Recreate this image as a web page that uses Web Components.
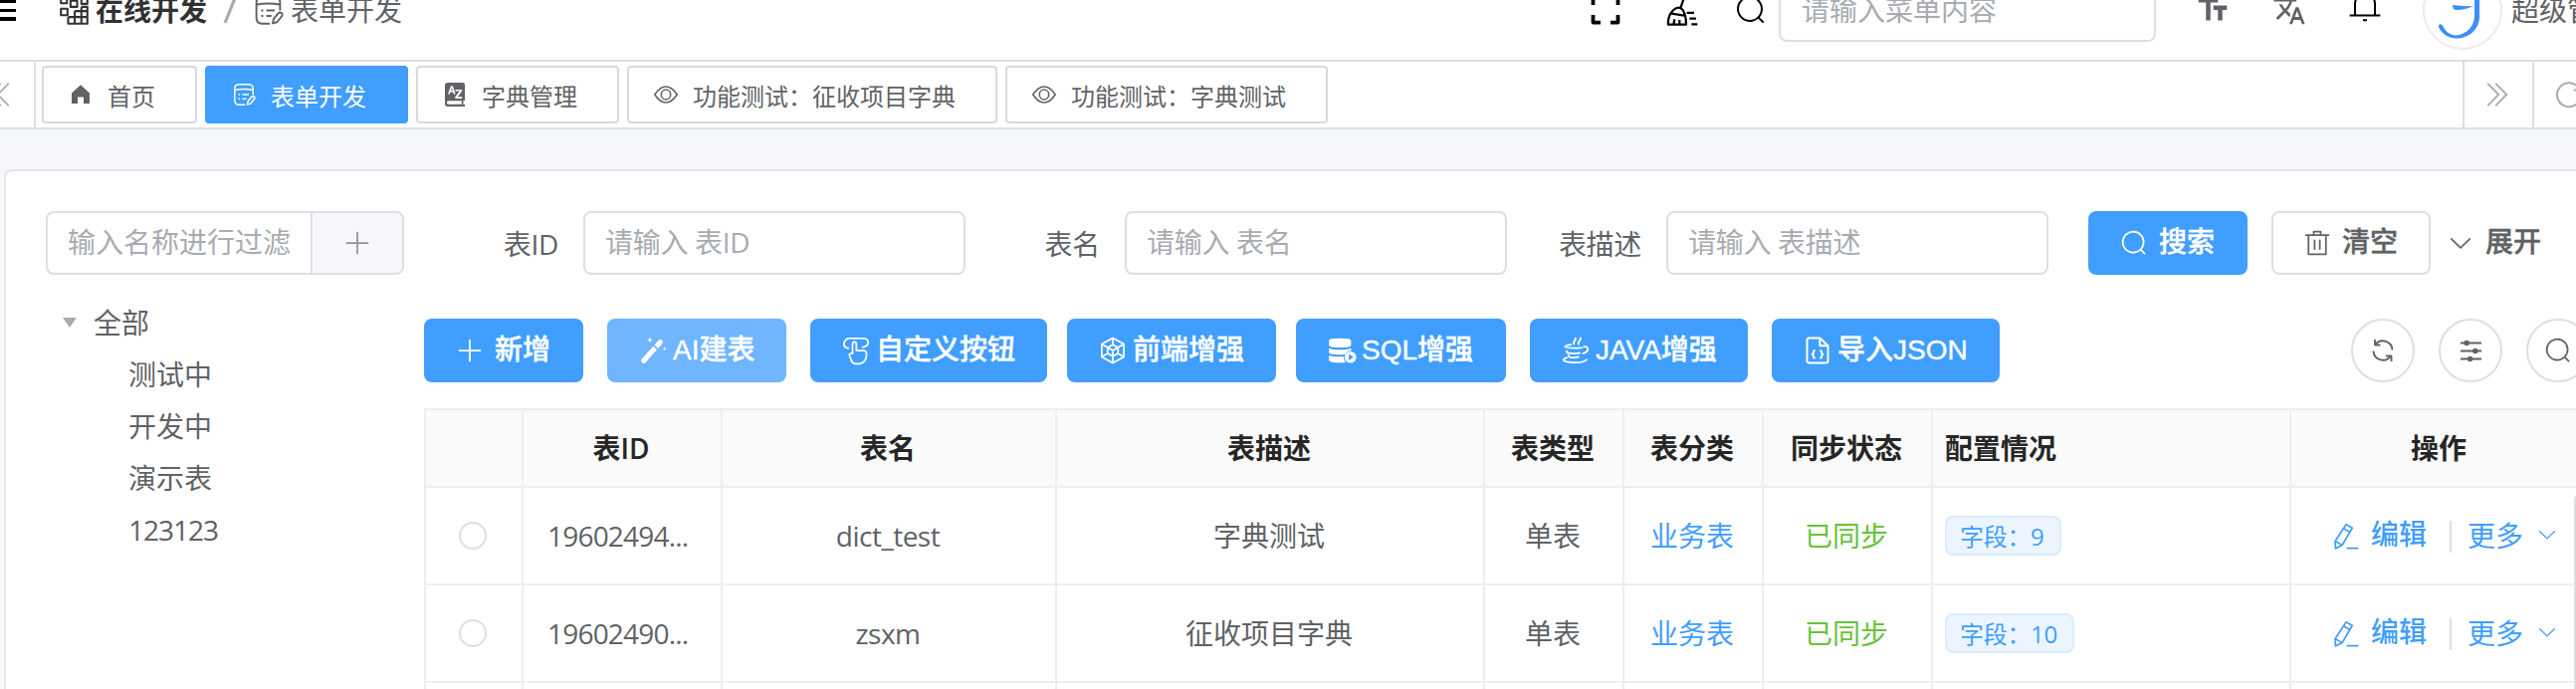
<!DOCTYPE html>
<html lang="zh-CN">
<head>
<meta charset="UTF-8">
<title>表单开发</title>
<style>
    body {
        margin: 0;
        width: 2588px;
        height: 692px;
        overflow: hidden;
        background: #f5f7fa;
        color: #606266;
        font-family: "Open Sans", "Noto Sans CJK SC", sans-serif;
        font-size: 28px;
        line-height: 1;
    }
</style>
</head>
<body>
<app-header></app-header>
<tab-bar>
    <tab-item icon="home">首页</tab-item>
    <tab-item icon="form" active>表单开发</tab-item>
    <tab-item icon="dict">字典管理</tab-item>
    <tab-item icon="view">功能测试：征收项目字典</tab-item>
    <tab-item icon="view">功能测试：字典测试</tab-item>
</tab-bar>
<form-page></form-page>

<script>
const ICONS = {
    search: '<path d="m795.904 750.72 124.992 124.928a32 32 0 0 1-45.248 45.248L750.656 795.904a416 416 0 1 1 45.248-45.248zM480 832a352 352 0 1 0 0-704 352 352 0 0 0 0 704z"/>',
    plus: '<path d="M480 480V128a32 32 0 0 1 64 0v352h352a32 32 0 1 1 0 64H544v352a32 32 0 1 1-64 0V544H128a32 32 0 0 1 0-64z"/>',
    trash: '<path d="M160 256H96a32 32 0 0 1 0-64h256V95.936a32 32 0 0 1 32-32h256a32 32 0 0 1 32 32V192h256a32 32 0 1 1 0 64h-64v672a32 32 0 0 1-32 32H192a32 32 0 0 1-32-32zm448-64v-64H416v64zM224 896h576V256H224zm192-128a32 32 0 0 1-32-32V416a32 32 0 0 1 64 0v320a32 32 0 0 1-32 32m192 0a32 32 0 0 1-32-32V416a32 32 0 0 1 64 0v320a32 32 0 0 1-32 32"/>',
    down: '<path d="M831.872 340.864 512 652.672 192.128 340.864a30.592 30.592 0 0 0-42.752 0 29.12 29.12 0 0 0 0 41.6L489.664 714.24a32 32 0 0 0 44.672 0l340.288-331.712a29.12 29.12 0 0 0 0-41.728 30.592 30.592 0 0 0-42.752 0z"/>',
    next: '<path d="M452.864 149.312a29.12 29.12 0 0 1 41.728.064L826.24 489.664a32 32 0 0 1 0 44.672L494.592 874.624a29.12 29.12 0 0 1-41.728 0 30.592 30.592 0 0 1 0-42.752L764.736 512 452.864 192a30.592 30.592 0 0 1 0-42.688m-256 0a29.12 29.12 0 0 1 41.728.064L570.24 489.664a32 32 0 0 1 0 44.672L238.592 874.624a29.12 29.12 0 0 1-41.728 0 30.592 30.592 0 0 1 0-42.752L508.736 512 196.864 192a30.592 30.592 0 0 1 0-42.688"/>',
    // the rest are drawn on a 24 grid
    text: '<path d="M2.5 4v3h5v12h3V7h5V4zm19 5h-9v3h3v7h3v-7h3z"/>',
    translate: '<path d="M12.87 15.07l-2.54-2.51.03-.03c1.74-1.94 2.98-4.17 3.71-6.53H17V4h-7V2H8v2H1v1.99h11.17C11.5 7.92 10.44 9.75 9 11.35 8.07 10.32 7.3 9.19 6.69 8h-2c.73 1.63 1.73 3.17 2.98 4.56l-5.09 5.02L4 19l5-5 3.11 3.11.76-2.04zM18.5 10h-2L12 22h2l1.12-3h4.75L21 22h2l-4.5-12zm-2.62 7l1.62-4.33L19.12 17h-3.24z"/>',
    home: '<path d="M12 2.2 21 10.4V21h-6v-6.6H9V21H3V10.4z"/>',
    dict: '<path fill-rule="evenodd" d="M5 0h15q2 0 2 2v16h-1.500v4H22v2H5q-3 0-3-3V3q0-3 3-3zM5.500 18.200q-1.700 0-1.700 1.800t1.700 1.800H18.800V18.200zM5 11.500h1.800l.6-1.900h2.800l.6 1.900h1.900L9.900 3.500H7.800zM8 8l.9-2.700.8 2.700zM12.500 8.500h4.300l-4.500 5.800V16h7v-1.700h-4.500l4.400-5.700V7h-6.700z"/>',
    view: '<g class="s" stroke-width="1.600"><path d="M.8 12Q6 4 12 4t11.200 8Q18 20 12 20T.8 12z"/><ellipse cx="12" cy="12" rx="4.700" ry="5"/></g>',
    form: '<g class="s" stroke-width="1.500"><path d="M21.200 12V5.500C21.200 3.200 19 1.800 16.500 1.800H7C4.500 1.800 2.800 3.500 2.800 5.500v12c0 3 1.500 4.700 4 4.700h6.500M2.800 7.500Q7 6.600 12 6.600t9.200.9M6.500 12h1.600M10.500 12h6.500M6.500 16.300h1.600M10.500 16.300h4M15.500 22l.6-3.300 3.700-4.500q1.400-1.200 2.500-.2t.2 2.600l-3.700 4.500z"/></g>',
    grid: '<g class="s" stroke-width="1.700"><path d="M1 1h5v5H1zM1 10.500h5.500v5.500H1zM9 4h5.500v5H9zM18 .5h5v6h-5zM12.500 12.500V23M18 9v14M7 17.500h16M12.500 12.500h10.500M18 9h5v14H7v-5.500"/></g>',
    full: '<g class="s" stroke-width="3"><path d="M2 8V2h6M16 2h6v6M22 16v6h-6M8 22H2v-6"/></g>',
    broom: '<g class="s" stroke-width="1.700"><path d="M14 1 10.800 10.500M5.500 12q4-3.500 7 0 2.500 4 2.500 11H1.500Q1 16 5.500 12zM4 14.800l9.500 1.500M5.500 23l.8-4M10 23v-3.500M15.500 14.200h5.500M17.500 18.500h5M19 22.800h4.500"/></g>',
    bell: '<g class="s" stroke-width="1.500"><path d="M4.500 18V9.500a7.500 7.500 0 0 1 15 0V18M.5 18.300h23M10.500 22h3M12 2V0"/></g>',
    reload: '<g class="s" stroke-width="1.500"><path d="M20.300 8.700A9 9 0 1 0 21 12M21 3.500v5.200h-5.500"/></g>',
    wand: '<path d="m2.200 19.600 10-11.200 3.200 3L5.400 22.600q-1.600 1-2.800-.2t-.4-2.800zM13.300 7.200l3.700-4.100q1.300-1.200 2.700 0t.4 3l-3.600 4.100zM9.300.5l.7 1.800 1.800.7-1.800.7-.7 1.800-.7-1.800L6.800 3l1.800-.7zM22 8.500l.5 1.500 1.500.5-1.500.5-.5 1.500-.5-1.500-1.500-.5 1.500-.5z"/>',
    touch: '<g class="s" stroke-width="1.500"><path d="M6 10H4.500Q1.500 9 1.500 6.500T5 1.500h13.500q4 .500 4 3.500T19 9h-2M9 15V6.500q.2-1.800 1.700-1.800t1.600 1.800V12h6q3 .5 2.800 3.500-.2 7-5.800 8h-3.800q-3-.5-4-4l-1.300-3.700q.8-2 2.800-.8"/></g>',
    hexagon: '<g class="s" stroke-width="1.500"><path d="m12 1.200 9.500 5.300v11L12 22.800 2.500 17.500v-11zM12 7l4.500 2.500v5L12 17l-4.500-2.500v-5zM12 12v5M12 12 7.500 9.500M12 12l4.500-2.500M12 1.200V7M2.500 6.500l5 3M21.500 6.500l-5 3M2.500 17.500l5-3M21.500 17.500l-5-3M12 17v5.800"/></g>',
    database: '<path d="M1 3.500Q1 1.500 10.500 1.500T20 3.500v4Q20 9.500 10.500 9.500T1 7.500zM1 10q3 1.300 9.500 1.300T20 10v2.200q-3.500.3-5 3-2 .5-4.500.5Q1 15.700 1 14zM1 16.200q3 1.200 9.500 1.200h3.300q-.3 2.800 1.500 4.900-2 .2-4.800.2Q1 22.500 1 20.500z"/><path fill-rule="evenodd" d="M19.500 12.800a5 5 0 1 1 0 10 5 5 0 0 1 0-10zm-1.400 2.300v5.400l4-2.700z"/>',
    java: '<g class="s" stroke-width="1.500"><path d="M11 7q-1.500-1.500 0-3.200T11.500.8M15 7q-1.500-1.500.2-3.200T15.800.8M8.500 7Q2 8 3 9t8 1 7-.8M18.500 8.800q4-.6 4 2 0 3-5 4M4.500 11.800q-1 2.200 1.500 2.500 5 .8 10-.2M6 15.500q-.8 2 1.500 2.400 3.800.5 7.500-.4M5 18.200q-4 .6-3.500 2.200 1.500 2 10 2t10.500-3"/></g>',
    json: '<g class="s" stroke-width="1.700"><path d="M14 1.200H5Q3 1.200 3 3.200v17.500q0 2 2 2h14q2 0 2-2V8zM14 1.200V8h7M10 12q-1.500 0-1.500 1.500T7.300 15.300q1.200.3 1.200 1.800T10 18.600M14 12q1.500 0 1.500 1.500t1.200 1.800q-1.200.3-1.200 1.800T14 18.600"/></g>',
    refresh: '<g class="s" stroke-width="1.900"><path d="M2.500 12.500a9.500 9.500 0 0 0 17 5.500M21.500 11.500A9.500 9.500 0 0 0 4.500 6M4 1v5.500h5.500M20.500 23v-5.500H15"/></g>',
    sliders: '<path d="M1 2.600h22v2H1zM1 11h22v2H1zM1 19.400h22v2H1z"/><circle cx="7.500" cy="3.600" r="2.900"/><circle cx="16.500" cy="12" r="2.900"/><circle cx="11" cy="20.400" r="2.900"/>',
    pen: '<g class="s" stroke-width="1.500"><path d="M12.500 1.500 18 4.700 9 20l-6 3-.300-6.500zM10.300 5.200l5.600 3.300M2.700 16.500l6 3.400M13 22.800h10.500"/></g>'
};

class UiIcon extends HTMLElement {
    connectedCallback() {
        const name = this.getAttribute('name');
        const size = this.getAttribute('size') || 28;
        const box = ['search', 'plus', 'trash', 'down', 'next'].includes(name) ? 1024 : 24;
        this.attachShadow({ mode: 'open' });
        this.shadowRoot.innerHTML = `
            <style>
                :host { display: block; flex: none; }
                svg { display: block; fill: currentColor; overflow: visible; }
                .s { fill: none; stroke: currentColor; stroke-linejoin: round; }
            </style>
            <svg width="${size}" height="${size}" viewBox="0 0 ${box} ${box}">${ICONS[name]}</svg>
        `;
    }
}

class AppHeader extends HTMLElement {
    connectedCallback() {
        this.attachShadow({ mode: 'open' });
        this.shadowRoot.innerHTML = `
            <style>
                :host {
                    display: flex;
                    align-items: center;
                    justify-content: space-between;
                    box-sizing: border-box;
                    height: 102px;
                    margin-top: -40px;
                    background: #fff;
                    border-bottom: 2px solid #dcdfe6;
                }
                .crumbs, .tools { display: flex; align-items: center; }
                .tools { width: 990px; color: #000; }
                .tools > * { flex: none; }
                .menu { width: 16px; height: 21px; border-top: 3px solid #000; box-sizing: border-box;
                    background: linear-gradient(#000, #000) 0 6px / 16px 3px no-repeat, linear-gradient(#000, #000) 0 100% / 16px 4px no-repeat; }
                .crumbs ui-icon { color: #303133; margin: 0 7px 0 44px; }
                .crumbs b { color: #303133; }
                .crumbs i { margin: 0 16px; width: 14px; }
                .crumbs i svg { display: block; }
                .crumbs .leaf { color: #606266; margin: 0 7px 0 0; }
                .input {
                    box-sizing: border-box;
                    width: 379px;
                    height: 64px;
                    margin: 0 39px 0 12px;
                    padding-left: 21px;
                    border: 2px solid #dcdfe6;
                    border-radius: 8px;
                    color: #a8abb2;
                    line-height: 60px;
                }
                .avatar { box-sizing: border-box; width: 80px; height: 80px; border: 2px solid #ececec; border-radius: 50%; margin: 0 9px 0 42px; }
                .avatar svg { display: block; margin: -2px; }
                .name, .gray { color: #606266; }
                .name { width: 56px; white-space: nowrap; }
            </style>
            <div class="crumbs">
                <div class="menu"></div>
                <ui-icon name="grid" size="29"></ui-icon>
                <b>在线开发</b>
                <i><svg width="14" height="30"><path d="M12.500 2 2 28" stroke="#a8abb2" stroke-width="3.200"/></svg></i>
                <ui-icon class="leaf" name="form" size="31"></ui-icon>
                <span>表单开发</span>
            </div>
            <div class="tools">
                <ui-icon name="full" size="30"></ui-icon>
                <ui-icon name="broom" size="32" style="margin-left: 46px"></ui-icon>
                <ui-icon name="search" size="32" style="margin-left: 37px"></ui-icon>
                <div class="input">请输入菜单内容</div>
                <ui-icon class="gray" name="text" size="36"></ui-icon>
                <ui-icon class="gray" name="translate" size="34" style="margin-left: 42px"></ui-icon>
                <ui-icon name="bell" size="32" style="margin: -6px 0 0 43px"></ui-icon>
                <div class="avatar">
                    <svg width="80" height="80" fill="#3d8ff8">
                        <path d="M57 8V48C56 61 45 69 33 68.500 23 68 16 60 16 56c0-2.500 3-2.500 4.500.500C23 62 28 65.500 33 65.500 43 65 52 57 52 46V8z"/>
                        <path d="M30 35q10 1.500 21 1-8 4-17 4-4 0-4-5z"/>
                    </svg>
                </div>
                <div class="name">超级管</div>
            </div>
        `;
    }
}

class TabBar extends HTMLElement {
    connectedCallback() {
        this.attachShadow({ mode: 'open' });
        this.shadowRoot.innerHTML = `
            <style>
                :host {
                    display: flex;
                    box-sizing: border-box;
                    height: 68px;
                    background: #fff;
                    border-bottom: 2px solid #dcdfe6;
                    color: #a8abb2;
                }
                div { display: flex; align-items: center; box-sizing: border-box; }
                .prev { width: 36px; border-right: 2px solid #dcdfe6; }
                .prev ui-icon { transform: scaleX(-1); margin-left: -17px; }
                .tabs { flex: 1; gap: 8px; padding-left: 6px; align-items: flex-start; padding-top: 4px; color: #606266; }
                .tool { width: 70px; padding-left: 17px; border-left: 2px solid #dcdfe6; }
                .tool:last-child { width: 44px; padding-left: 19px; overflow: hidden; }
            </style>
            <div class="prev"><ui-icon name="next" size="32"></ui-icon></div>
            <div class="tabs"><slot></slot></div>
            <div class="tool"><ui-icon name="next" size="32"></ui-icon></div>
            <div class="tool"><ui-icon name="reload" size="32"></ui-icon></div>
        `;
    }
}

class TabItem extends HTMLElement {
    connectedCallback() {
        this.attachShadow({ mode: 'open' });
        this.shadowRoot.innerHTML = `
            <style>
                :host {
                    display: flex;
                    align-items: center;
                    gap: 15px;
                    box-sizing: border-box;
                    height: 58px;
                    padding: 0 40px 0 25px;
                    border: 2px solid #d9d9d9;
                    border-radius: 4px;
                    font-size: 24px;
                    white-space: nowrap;
                }
                :host([active]) { color: #fff; background: #409eff; border-color: #409eff; }
                span { padding-top: 3px; }
            </style>
            <ui-icon name="${this.getAttribute('icon')}" size="24"></ui-icon>
            <span><slot></slot></span>
        `;
    }
}

class UiButton extends HTMLElement {
    connectedCallback() {
        this.attachShadow({ mode: 'open' });
        this.shadowRoot.innerHTML = `
            <style>
                :host {
                    display: flex;
                    flex: none;
                    align-items: center;
                    gap: 6px;
                    box-sizing: border-box;
                    width: var(--w, 160px);
                    height: 64px;
                    padding-left: 32px;
                    border-radius: 8px;
                    background: #409eff;
                    color: #fff;
                    font-family: "Liberation Sans", "Noto Sans CJK SC", sans-serif;
                    font-weight: 500;
                    white-space: nowrap;
                    -webkit-text-stroke: 0.4px currentColor;
                }
                :host([wide]) { gap: 11px; }
                :host([light]) { background: #6fb5ff; }
                :host([plain]) { background: #fff; color: #606266; border: 2px solid #dcdfe6; padding-left: 30px; }
                :host([text]) { background: none; color: #606266; padding-left: 0; }
            </style>
            <ui-icon name="${this.getAttribute('icon')}"></ui-icon>
            <span><slot></slot></span>
        `;
    }
}

class SearchField extends HTMLElement {
    connectedCallback() {
        const label = this.getAttribute('label');
        this.attachShadow({ mode: 'open' });
        this.shadowRoot.innerHTML = `
            <style>
                :host { display: flex; align-items: center; gap: 25px; flex: none; letter-spacing: -0.3px; }
                label { width: 135px; text-align: right; padding-top: 2px; }
                div {
                    box-sizing: border-box;
                    width: 384px;
                    height: 64px;
                    padding-left: 20px;
                    border: 2px solid #dcdfe6;
                    border-radius: 8px;
                    color: #a8abb2;
                    line-height: 58px;
                }
            </style>
            <label>${label}</label>
            <div>请输入 ${label}</div>
        `;
    }
}

class TypeTree extends HTMLElement {
    connectedCallback() {
        this.attachShadow({ mode: 'open' });
        this.shadowRoot.innerHTML = `
            <style>
                :host { display: block; width: 360px; flex: none; }
                .filter {
                    display: flex;
                    box-sizing: border-box;
                    height: 64px;
                    border: 2px solid #dcdfe6;
                    border-radius: 8px;
                    overflow: hidden;
                    margin-bottom: 22px;
                    color: #a8abb2;
                    line-height: 58px;
                }
                .filter span { width: 244px; padding-left: 20px; }
                .filter div { flex: 1; display: flex; align-items: center; justify-content: center; background: #f5f7fa; border-left: 2px solid #dcdfe6; color: #909399; }
                .node { display: flex; align-items: center; height: 52px; padding-left: 83px; }
                .root { padding-left: 17px; gap: 17px; }
                .root::before { content: ""; border: 7px solid transparent; border-top: 10px solid #a8abb2; border-bottom: 0; }
                .num { letter-spacing: -1px; }
            </style>
            <div class="filter"><span>输入名称进行过滤</span><div><ui-icon name="plus"></ui-icon></div></div>
            <div class="node root">全部</div>
            <div class="node">测试中</div>
            <div class="node">开发中</div>
            <div class="node">演示表</div>
            <div class="node num">123123</div>
        `;
    }
}

class DataTable extends HTMLElement {
    connectedCallback() {
        const heads = ['', '表ID', '表名', '表描述', '表类型', '表分类', '同步状态', '配置情况', '操作'];
        const rows = [
            ['19602494...', 'dict_test', '字典测试', '9'],
            ['19602490...', 'zsxm', '征收项目字典', '10']
        ];
        this.attachShadow({ mode: 'open' });
        this.shadowRoot.innerHTML = `
            <style>
                :host { display: block; position: relative; border-top: 2px solid #ebeef5; border-left: 2px solid #ebeef5; }
                .row { display: grid; grid-template-columns: 98px 200px 336px 430px 140px 140px 170px 360px 300px; height: 98px; }
                .head { height: 78px; background: #fafafa; color: #262626; font-weight: 600; }
                .row > div {
                    display: flex;
                    align-items: center;
                    justify-content: center;
                    border-right: 2px solid #ebeef5;
                    border-bottom: 2px solid #ebeef5;
                    padding-right: 2px;
                }
                .row > div:nth-child(8) { justify-content: flex-start; padding-left: 12px; }
                .radio { width: 24px; height: 24px; border: 2px solid #dcdfe6; border-radius: 50%; margin-top: -1px; }
                .row .id { justify-content: flex-start; padding-left: 24px; letter-spacing: -0.8px; }
                .name { letter-spacing: -0.5px; }
                .blue { color: #409eff; }
                .green { color: #67c23a; }
                .tag {
                    height: 36px;
                    padding: 0 15px 0 13px;
                    border: 2px solid #d9ecff;
                    border-radius: 8px;
                    background: #ecf5ff;
                    color: #409eff;
                    font-size: 24px;
                    line-height: 38px;
                    margin-top: -1px;
                    letter-spacing: -0.3px;
                }
                .row .ops { justify-content: flex-start; padding-left: 41px; color: #409eff; }
                .ops span { margin-left: 12px; font-weight: 500; margin-top: -4px; }
                .ops i { width: 2px; height: 32px; background: #dcdfe6; margin: 2px 16px 0 23px; }
                .ops ui-icon:last-child { margin: -3px 0 0 13px; }
                .scroll { position: absolute; left: 2158px; top: 84px; width: 12px; height: 300px; border-radius: 6px; background: #dddee0; }
            </style>
            <div class="row head">${heads.map(h => `<div>${h}</div>`).join('')}</div>
            ${rows.map(([id, name, desc, count]) => `
                <div class="row">
                    <div><span class="radio"></span></div>
                    <div class="id">${id}</div>
                    <div class="name">${name}</div>
                    <div>${desc}</div>
                    <div>单表</div>
                    <div class="blue">业务表</div>
                    <div class="green">已同步</div>
                    <div><span class="tag">字段：${count}</span></div>
                    <div class="ops">
                        <ui-icon name="pen" size="27"></ui-icon><span>编辑</span><i></i>更多
                        <ui-icon name="down" size="22"></ui-icon>
                    </div>
                </div>`).join('')}
            <div class="row">${heads.map(() => '<div></div>').join('')}</div>
            <div class="scroll"></div>
        `;
    }
}

class FormPage extends HTMLElement {
    connectedCallback() {
        this.attachShadow({ mode: 'open' });
        this.shadowRoot.innerHTML = `
            <style>
                :host {
                    display: flex;
                    gap: 20px;
                    box-sizing: border-box;
                    height: 522px;
                    margin: 40px 0 0 4px;
                    padding: 40px 0 0 40px;
                    border: 2px solid #e4e7ed;
                    border-width: 2px 0 0 2px;
                    border-radius: 8px 0 0 0;
                    background: #fff;
                    overflow: hidden;
                }
                .main { width: 2176px; flex: none; }
                .line { display: flex; align-items: center; }
                .bar { margin: 44px 0 26px; gap: 24px; }
                .circle {
                    display: flex;
                    align-items: center;
                    justify-content: center;
                    flex: none;
                    box-sizing: border-box;
                    width: 64px;
                    height: 64px;
                    border: 2px solid #dcdfe6;
                    border-radius: 50%;
                }
                .push { margin-left: auto; }
            </style>
            <type-tree></type-tree>
            <div class="main">
                <div class="line">
                    <search-field label="表ID"></search-field>
                    <search-field label="表名"></search-field>
                    <search-field label="表描述"></search-field>
                    <ui-button icon="search" wide style="margin-left: 40px">搜索</ui-button>
                    <ui-button icon="trash" wide plain style="margin: 0 16px 0 24px">清空</ui-button>
                    <ui-button icon="down" wide text style="--w: 110px">展开</ui-button>
                </div>
                <div class="line bar">
                    <ui-button icon="plus" wide>新增</ui-button>
                    <ui-button icon="wand" light style="--w: 180px">AI建表</ui-button>
                    <ui-button icon="touch" style="--w: 238px; margin-right: -4px">自定义按钮</ui-button>
                    <ui-button icon="hexagon" style="--w: 210px; margin-right: -4px">前端增强</ui-button>
                    <ui-button icon="database" style="--w: 211px">SQL增强</ui-button>
                    <ui-button icon="java" style="--w: 219px">JAVA增强</ui-button>
                    <ui-button icon="json" style="--w: 229px">导入JSON</ui-button>
                    <div class="circle push"><ui-icon name="refresh" size="24"></ui-icon></div>
                    <div class="circle"><ui-icon name="sliders" size="23"></ui-icon></div>
                    <div class="circle"><ui-icon name="search" size="28"></ui-icon></div>
                </div>
                <data-table></data-table>
            </div>
        `;
    }
}

customElements.define('ui-icon', UiIcon);
customElements.define('app-header', AppHeader);
customElements.define('tab-bar', TabBar);
customElements.define('tab-item', TabItem);
customElements.define('ui-button', UiButton);
customElements.define('search-field', SearchField);
customElements.define('type-tree', TypeTree);
customElements.define('data-table', DataTable);
customElements.define('form-page', FormPage);
</script>
</body>
</html>
